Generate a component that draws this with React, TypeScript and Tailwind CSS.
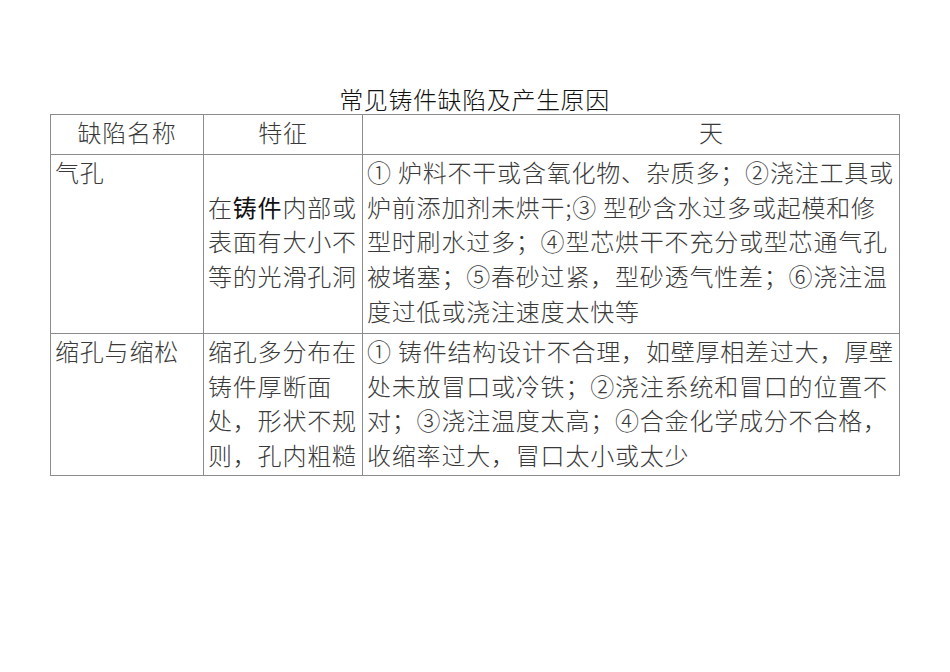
const rows = [
  {
    name: ['气孔'],
    feature: ['', <>在<span className="font-normal text-[#111]">铸件</span>内部或</>, '表面有大小不', '等的光滑孔洞'],
    cause: [
      '① 炉料不干或含氧化物、杂质多；②浇注工具或',
      '炉前添加剂未烘干;③ 型砂含水过多或起模和修',
      '型时刷水过多；④型芯烘干不充分或型芯通气孔',
      '被堵塞；⑤春砂过紧，型砂透气性差；⑥浇注温',
      '度过低或浇注速度太快等',
    ],
    height: 'h-[179px]',
  },
  {
    name: ['缩孔与缩松'],
    feature: ['缩孔多分布在', '铸件厚断面', '处，形状不规', '则，孔内粗糙'],
    cause: [
      '① 铸件结构设计不合理，如壁厚相差过大，厚壁',
      '处未放冒口或冷铁；②浇注系统和冒口的位置不',
      '对；③浇注温度太高；④合金化学成分不合格，',
      '收缩率过大，冒口太小或太少',
    ],
    height: 'h-[142px]',
  },
];

function Lines({ lines }: { lines: React.ReactNode[] }) {
  return (
    <>
      {lines.map((l, i) => (
        <div key={i} className="h-[34.7px] leading-[34.7px] whitespace-nowrap">
          {l}
        </div>
      ))}
    </>
  );
}

export default function App() {
  return (
    <div className="w-[950px] h-[672px] bg-white font-['Noto_Sans_CJK_SC',sans-serif] text-[24px] tracking-[0.8px] font-light text-[#3a3a3a]">
      <div className="pt-[84px] pl-[50px]">
        <h1 className="w-[849px] text-center text-[24px] leading-[30px] font-light text-[#111] tracking-[0.6px]">
          常见铸件缺陷及产生原因
        </h1>
        <table className="w-[850px] border-collapse table-fixed">
          <colgroup>
            <col className="w-[153px]" />
            <col className="w-[159px]" />
            <col />
          </colgroup>
          <thead>
            <tr className="h-[40px]">
              <th className="border border-[#8c8c8c] text-center font-light align-top leading-[34px]">缺陷名称</th>
              <th className="border border-[#8c8c8c] text-center font-light align-top leading-[34px]">特征</th>
              <th className="border border-[#8c8c8c] text-left pl-[336px] font-light align-top leading-[34px]">天</th>
            </tr>
          </thead>
          <tbody>
            {rows.map((r, i) => (
              <tr key={i} className={r.height}>
                <td className="border border-[#8c8c8c] align-top pl-[4px]">
                  <Lines lines={r.name} />
                </td>
                <td className="border border-[#8c8c8c] align-top pl-[4px]">
                  <Lines lines={r.feature} />
                </td>
                <td className="border border-[#8c8c8c] align-top pl-[4px]">
                  <Lines lines={r.cause} />
                </td>
              </tr>
            ))}
          </tbody>
        </table>
      </div>
    </div>
  );
}
